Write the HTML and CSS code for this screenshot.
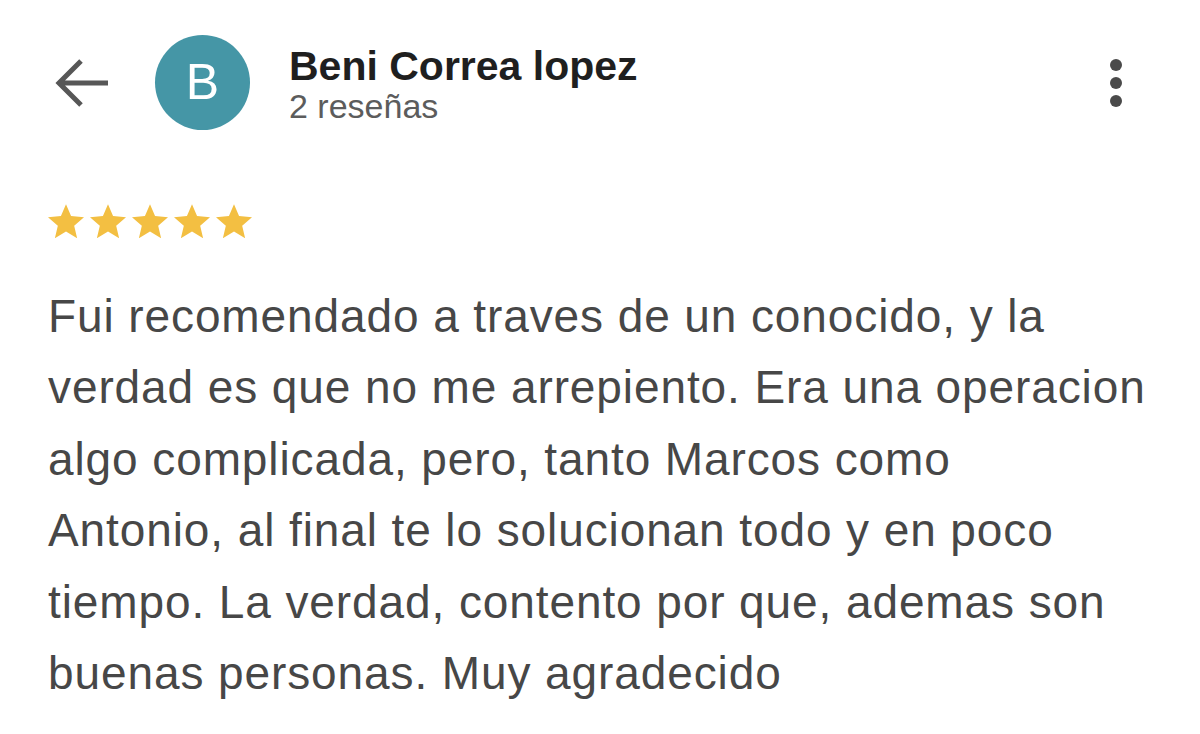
FILE: index.html
```html
<!DOCTYPE html>
<html lang="es">
<head>
<meta charset="utf-8">
<title>Reseña</title>
<link rel="stylesheet" href="styles.css">
</head>
<body>
<div class="page">
  <header class="header">
    <svg class="back" width="58" height="50" viewBox="0 0 58 50" aria-label="Atrás">
      <path d="M6 25 H56 M29 3 L7 25 L29 47" fill="none" stroke="#575757" stroke-width="5"/>
    </svg>
    <div class="avatar">B</div>
    <div class="who">
      <div class="name">Beni Correa lopez</div>
      <div class="count">2 reseñas</div>
    </div>
    <svg class="more" width="12" height="48" viewBox="0 0 12 48" aria-label="Más">
      <circle cx="6" cy="6" r="6" fill="#4a4a4a"/>
      <circle cx="6" cy="24" r="6" fill="#4a4a4a"/>
      <circle cx="6" cy="42" r="6" fill="#4a4a4a"/>
    </svg>
  </header>
  <main class="review">
    <div class="stars">
      <svg class="star" viewBox="2 2 20 19.3"><path d="M12 17.27L18.18 21l-1.64-7.03L22 9.24l-7.19-.61L12 2 9.19 8.63 2 9.24l5.46 4.73L5.82 21z"/></svg>
      <svg class="star" viewBox="2 2 20 19.3"><path d="M12 17.27L18.18 21l-1.64-7.03L22 9.24l-7.19-.61L12 2 9.19 8.63 2 9.24l5.46 4.73L5.82 21z"/></svg>
      <svg class="star" viewBox="2 2 20 19.3"><path d="M12 17.27L18.18 21l-1.64-7.03L22 9.24l-7.19-.61L12 2 9.19 8.63 2 9.24l5.46 4.73L5.82 21z"/></svg>
      <svg class="star" viewBox="2 2 20 19.3"><path d="M12 17.27L18.18 21l-1.64-7.03L22 9.24l-7.19-.61L12 2 9.19 8.63 2 9.24l5.46 4.73L5.82 21z"/></svg>
      <svg class="star" viewBox="2 2 20 19.3"><path d="M12 17.27L18.18 21l-1.64-7.03L22 9.24l-7.19-.61L12 2 9.19 8.63 2 9.24l5.46 4.73L5.82 21z"/></svg>
    </div>
    <p class="text">Fui recomendado a traves de un conocido, y la<br>verdad es que no me arrepiento. Era una operacion<br>algo complicada, pero, tanto Marcos como<br>Antonio, al final te lo solucionan todo y en poco<br>tiempo. La verdad, contento por que, ademas son<br>buenas personas. Muy agradecido</p>
  </main>
</div>
</body>
</html>
```

FILE: styles.css
```css
html, body {
  margin: 0;
  padding: 0;
  background: #ffffff;
}

body {
  font-family: "Liberation Sans", Arial, sans-serif;
  width: 1200px;
  height: 734px;
  overflow: hidden;
}

.header {
  display: flex;
  align-items: center;
  padding: 35px 78px 0 52px;
}

.back {
  flex: none;
  display: block;
}

.avatar {
  flex: none;
  width: 95px;
  height: 95px;
  border-radius: 50%;
  background: #4596a6;
  color: #ffffff;
  font-size: 50px;
  line-height: 95px;
  text-align: center;
  margin-left: 45px;
}

.who {
  margin-left: 39px;
  display: flex;
  flex-direction: column;
}

.name {
  font-size: 41px;
  font-weight: 700;
  line-height: 46px;
  color: #1f1f1f;
}

.count {
  font-size: 34px;
  line-height: 34px;
  color: #5c5c5c;
}

.more {
  flex: none;
  display: block;
  margin-left: auto;
}

.review {
  padding: 0 10px 0 48px;
}

.stars {
  display: flex;
  gap: 6px;
  margin-top: 74px;
}

.star {
  display: block;
  width: 36px;
  height: 35px;
  fill: #f3bf42;
}

.text {
  margin: 42px 0 0 0;
  font-size: 46px;
  line-height: 71.4px;
  letter-spacing: 0.9px;
  color: #474747;
  white-space: nowrap;
}
```
